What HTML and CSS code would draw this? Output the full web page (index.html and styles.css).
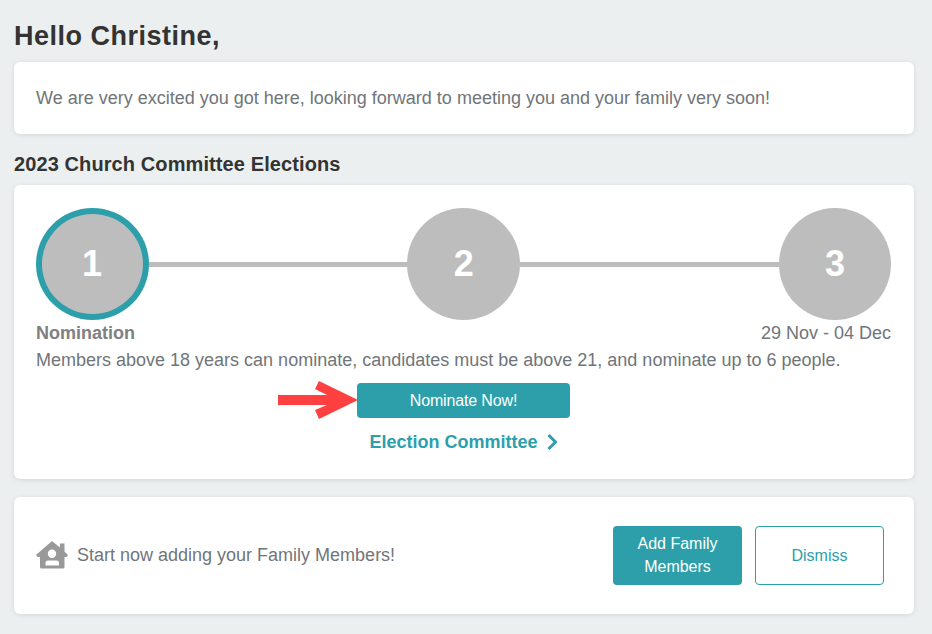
FILE: index.html
```html
<!DOCTYPE html>
<html lang="en">
<head>
    <meta charset="UTF-8">
    <title>Dashboard</title>
    <link rel="stylesheet" href="styles.css">
</head>
<body>
<h1 class="title">Hello Christine,</h1>
<div class="card welcome">We are very excited you got here, looking forward to meeting you and your family very soon!</div>
<h2 class="subtitle">2023 Church Committee Elections</h2>
<div class="card election">
    <div class="steps">
        <div class="step current">1</div>
        <div class="line"></div>
        <div class="step middle">2</div>
        <div class="line"></div>
        <div class="step">3</div>
    </div>
    <div class="step-info">
        <span class="step-name">Nomination</span>
        <span class="step-date">29 Nov - 04 Dec</span>
    </div>
    <p class="step-text">Members above 18 years can nominate, candidates must be above 21, and nominate up to 6 people.</p>
    <div class="nominate">
        <svg class="arrow" width="82" height="40" viewBox="0 0 82 40">
            <path d="M1 15H50L38 9 42 1 81 20 42 39 38 30 50 25H1Z" fill="#ff4040"/>
        </svg>
        <a class="btn btn-nominate">Nominate Now!</a>
    </div>
    <a class="committee">Election Committee
        <svg width="12" height="18" viewBox="0 0 12 18"><path d="M2.5 2 9.5 9 2.5 16" fill="none" stroke="#2c9faa" stroke-width="3"/></svg>
    </a>
</div>
<div class="card family">
    <svg class="house" width="32" height="28" viewBox="0 0 32 28">
        <path fill-rule="evenodd" fill="#999" d="M16 0 24 6.500V2.500H28.500V10.500L32 14 30.500 16H28.500V26Q28.500 27.500 27 27.500H5.500Q4 27.500 4 26V16H1.500L0 14ZM16 8.500A4.200 4.200 0 1 0 16 16.900 4.200 4.200 0 1 0 16 8.500ZM9.500 24.500H23V22Q23 19.500 20.500 19.500H12Q9.500 19.500 9.500 22Z"/>
    </svg>
    <span class="family-text">Start now adding your Family Members!</span>
    <a class="btn btn-add">Add Family Members</a>
    <a class="btn btn-dismiss">Dismiss</a>
</div>
</body>
</html>
```

FILE: styles.css
```css
*{
    margin: 0;
    padding: 0;
    box-sizing: border-box;
}
body{
    background-color: #ebeff0;
    font-family: "Liberation Sans", Arial, sans-serif;
    color: #70757a;
    padding: 19px 18px 20px 14px;
}
.title{
    font-size: 27px;
    line-height: 34px;
    letter-spacing: 0.5px;
    color: #333;
    margin-bottom: 9px;
}
.subtitle{
    font-size: 20px;
    line-height: 24px;
    letter-spacing: 0.1px;
    color: #333;
    margin: 18px 0 9px;
}
.card{
    background-color: #fff;
    border-radius: 6px;
    box-shadow: 0 1px 5px rgba(0,0,0,0.1);
}
.welcome{
    height: 72px;
    line-height: 72px;
    padding-left: 22px;
    font-size: 18px;
}
.election{
    height: 294px;
    padding: 23px 23px 0 22px;
    margin-bottom: 18px;
}
.steps{
    display: flex;
    align-items: center;
}
.step{
    flex: none;
    width: 112px;
    height: 112px;
    line-height: 112px;
    border-radius: 50%;
    background-color: #bdbdbd;
    color: #fff;
    font-size: 36px;
    font-weight: bold;
    text-align: center;
}
.step.middle{
    width: 113px;
    margin-left: -0.5px;
}
.step.current{
    width: 113px;
    border: 6px solid #2c9faa;
    line-height: 100px;
    text-indent: -1px;
}
.line{
    flex: 1;
    height: 5px;
    background-color: #bdbdbd;
}
.step-info{
    display: flex;
    justify-content: space-between;
    font-size: 18px;
    line-height: 24px;
    margin-top: 1px;
}
.step-name{
    font-weight: bold;
    color: #808080;
}
.step-text{
    font-size: 18px;
    line-height: 24px;
    margin-top: 3px;
}
.nominate{
    position: relative;
    width: 213px;
    margin: 11px auto 0;
}
.arrow{
    position: absolute;
    left: -80px;
    top: -3px;
}
.btn{
    display: block;
    border-radius: 4px;
    text-align: center;
    font-size: 16px;
}
.btn-nominate{
    height: 35px;
    line-height: 35px;
    letter-spacing: -0.15px;
    background-color: #2c9faa;
    color: #fff;
}
.committee{
    display: flex;
    justify-content: center;
    align-items: center;
    gap: 8px;
    margin-top: 12px;
    font-size: 18px;
    line-height: 24px;
    font-weight: bold;
    color: #2c9faa;
}
.family{
    height: 117px;
    display: flex;
    align-items: center;
    padding: 0 30px 0 22px;
    font-size: 18px;
}
.house{
    flex: none;
    margin: 0 9px 2px 0;
}
.family-text{
    flex: 1;
}
.btn-add{
    width: 129px;
    height: 59px;
    padding-top: 6px;
    line-height: 23px;
    background-color: #2c9faa;
    color: #fff;
    margin-right: 13px;
}
.btn-dismiss{
    width: 129px;
    height: 59px;
    line-height: 57px;
    border: 1px solid #2c9faa;
    color: #2c9faa;
}
```
